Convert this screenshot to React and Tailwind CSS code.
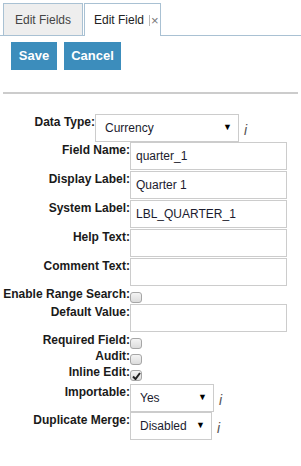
import React from "react";

const font = { fontFamily: '"Liberation Sans", Arial, sans-serif' };

function Info() {
  return (
    <span className="ml-[5px] mt-[9px] text-[14px] italic leading-[14px] text-[#555]">
      i
    </span>
  );
}

function Select({ value, width }) {
  return (
    <div
      className={`flex h-[28px] items-center justify-between border border-[#ccc] bg-white pl-[9px] pr-[6px] text-[12px] text-[#1b1b2e] ${width}`}
    >
      <span>{value}</span>
      <span className="text-[9px] text-black">▼</span>
    </div>
  );
}

function TextRow({ label, value }) {
  return (
    <div className="mb-[1px] flex">
      <label className="w-[127px] pt-[1px] text-right text-[12px] font-bold leading-[14px] text-[#1a1a1a]">
        {label}
      </label>
      <div className="flex h-[28px] w-[157px] items-center border border-[#ccc] bg-white px-[5px] text-[12px] text-[#1b1b2e]">
        {value}
      </div>
    </div>
  );
}

function CheckRow({ label, checked, h = "h-[16px]" }) {
  return (
    <div className={`flex ${h}`}>
      <label className="w-[127px] text-right text-[12px] font-bold leading-[14px] text-[#1a1a1a]">
        {label}
      </label>
      <div className="mt-[5px] flex h-[11px] w-[12px] items-center justify-center rounded-[3px] border border-[#a6a6a6] bg-gradient-to-b from-[#f4f4f4] to-[#dcdcdc]">
        {checked && (
          <svg width="9" height="8" viewBox="0 0 9 8">
            <path d="M1 4.5 L3.5 7 L8 1" stroke="#222" strokeWidth="2" fill="none" />
          </svg>
        )}
      </div>
    </div>
  );
}

export default function App() {
  return (
    <div className="h-[466px] w-[301px] bg-white" style={font}>
      {/* tabs */}
      <div className="flex h-[36px] items-end border-b border-[#a9c1d3] pl-[3px]">
        <div className="flex h-[32px] w-[80px] items-center justify-center border border-b-0 border-[#a9c1d3] bg-[#eee] text-[12px] text-[#444]">
          Edit Fields
        </div>
        <div className="-mb-[1px] ml-[1px] flex h-[33px] w-[77px] items-center border border-b-0 border-[#a9c1d3] bg-white pl-[9px] text-[12px] text-[#222]">
          Edit Field
          <span className="ml-[5px] flex items-center text-[13px] leading-none text-[#777]">
            <span className="mr-[1px] h-[11px] w-px bg-[#bbb]" />×
          </span>
        </div>
      </div>

      {/* buttons */}
      <div className="ml-[11px] mt-[6px] flex gap-[7px]">
        <button className="h-[28px] w-[46px] bg-[#3c8dbc] text-[13px] font-bold text-white">
          Save
        </button>
        <button className="h-[28px] w-[57px] bg-[#3c8dbc] text-[13px] font-bold text-white">
          Cancel
        </button>
      </div>

      <hr className="mx-[3px] mt-[22px] border-t-2 border-[#ccc]" />

      <div className="mt-[20px] pl-[3px]">
        <div className="flex">
          <label className="w-[92px] pt-[1px] text-right text-[12px] font-bold leading-[14px] text-[#1a1a1a]">
            Data Type:
          </label>
          <Select value="Currency" width="w-[144px]" />
          <Info />
        </div>
        <TextRow label="Field Name:" value="quarter_1" />
        <TextRow label="Display Label:" value="Quarter 1" />
        <TextRow label="System Label:" value="LBL_QUARTER_1" />
        <TextRow label="Help Text:" value="" />
        <TextRow label="Comment Text:" value="" />
        <CheckRow label="Enable Range Search:" h="h-[17px]" />
        <TextRow label="Default Value:" value="" />
        <CheckRow label="Required Field:" />
        <CheckRow label="Audit:" />
        <CheckRow label="Inline Edit:" checked />
        <div className="mt-[3px] flex">
          <label className="w-[127px] pt-[1px] text-right text-[12px] font-bold leading-[14px] text-[#1a1a1a]">
            Importable:
          </label>
          <Select value="Yes" width="w-[84px]" />
          <Info />
        </div>
        <div className="flex">
          <label className="w-[127px] pt-[1px] text-right text-[12px] font-bold leading-[14px] text-[#1a1a1a]">
            Duplicate Merge:
          </label>
          <Select value="Disabled" width="w-[82px]" />
          <Info />
        </div>
      </div>
    </div>
  );
}
